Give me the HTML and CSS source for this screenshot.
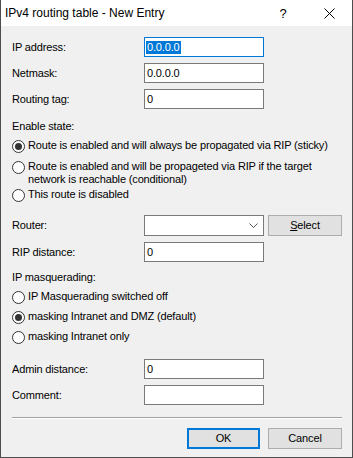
FILE: index.html
```html
<!DOCTYPE html>
<html>
<head>
<meta charset="utf-8">
<link rel="stylesheet" href="styles.css">
</head>
<body>
<div class="window">
  <div class="titlebar">
    <span class="title">IPv4 routing table - New Entry</span>
    <span class="cap help">?</span>
    <span class="cap close"><svg width="11" height="11" viewBox="0 0 11 11"><path d="M0.5 0.5 L10.5 10.5 M10.5 0.5 L0.5 10.5" stroke="#000" stroke-width="1" fill="none"/></svg></span>
  </div>
  <div class="content">
    <div class="row"><span class="lbl">IP address:</span><div class="input focus"><span class="sel">0.0.0.0</span></div></div>
    <div class="row gap6"><span class="lbl">Netmask:</span><div class="input">0.0.0.0</div></div>
    <div class="row gap6"><span class="lbl">Routing tag:</span><div class="input">0</div></div>

    <div class="group-label enable">Enable state:</div>
    <div class="radios">
      <div class="radio on"><span class="dot"></span><span class="rtext">Route is enabled and will always be propagated via RIP (sticky)</span></div>
      <div class="radio sp3"><span class="dot"></span><span class="rtext">Route is enabled and will be propageted via RIP if the target<br>network is reachable (conditional)</span></div>
      <div class="radio"><span class="dot"></span><span class="rtext">This route is disabled</span></div>
    </div>

    <div class="row router"><span class="lbl">Router:</span>
      <div class="combo"><svg class="chev" width="9" height="5" viewBox="0 0 9 5"><path d="M0.5 0.5 L4.5 4.5 L8.5 0.5" stroke="#555" stroke-width="1" fill="none"/></svg></div>
      <div class="btn select"><u>S</u>elect</div>
    </div>
    <div class="row gap6"><span class="lbl">RIP distance:</span><div class="input">0</div></div>

    <div class="group-label masq">IP masquerading:</div>
    <div class="radios">
      <div class="radio"><span class="dot"></span><span class="rtext">IP Masquerading switched off</span></div>
      <div class="radio on sp2"><span class="dot"></span><span class="rtext">masking Intranet and DMZ (default)</span></div>
      <div class="radio sp2"><span class="dot"></span><span class="rtext">masking Intranet only</span></div>
    </div>

    <div class="row admin"><span class="lbl">Admin distance:</span><div class="input">0</div></div>
    <div class="row gap6"><span class="lbl">Comment:</span><div class="input"></div></div>

    <div class="sep"></div>
    <div class="buttons">
      <div class="btn default">OK</div>
      <div class="btn cancel">Cancel</div>
    </div>
  </div>
</div>
</body>
</html>
```
FILE: styles.css
```css
html, body {
  margin: 0;
  padding: 0;
  background: #f0f0f0;
}
body {
  font-family: "Liberation Sans", Arial, sans-serif;
  color: #000;
}
.window {
  width: 353px;
  height: 458px;
  box-sizing: border-box;
  border: 1px solid #4d4d4d;
  border-top: none;
  display: flex;
  flex-direction: column;
  background: #f0f0f0;
}
.titlebar {
  height: 26px;
  background: #fff;
  display: flex;
  align-items: center;
  flex: none;
}
.title {
  flex: 1;
  padding-left: 4px;
  font-size: 12px;
  line-height: 26px;
  color: #000;
}
.cap {
  width: 46px;
  height: 26px;
  display: flex;
  align-items: center;
  justify-content: center;
}
.help {
  font-size: 13px;
  padding-top: 0px;
}
.close svg {
  display: block;
}
.content {
  flex: 1;
  padding: 11px 10px 0 11px;
  display: flex;
  flex-direction: column;
  font-size: 11px;
  letter-spacing: -0.15px;
}
.row {
  display: flex;
  align-items: center;
  height: 20px;
  flex: none;
}
.gap6 { margin-top: 6px; }
.lbl {
  width: 132px;
  line-height: 13px;
  flex: none;
}
.input {
  width: 120px;
  height: 20px;
  box-sizing: border-box;
  border: 1px solid #7a7a7a;
  background: #fff;
  padding-left: 2px;
  line-height: 18px;
  white-space: nowrap;
}
.input.focus {
  border-color: #0078d7;
  padding-left: 1px;
}
.sel {
  display: inline-block;
  background: #0078d7;
  color: #fff;
  line-height: 13px;
  padding: 0 1px;
  vertical-align: 0px;
}
.group-label {
  line-height: 13px;
  flex: none;
}
.enable { margin-top: 11px; }
.masq { margin-top: 9px; }
.radios {
  margin-top: 4px;
  display: flex;
  flex-direction: column;
}
.radio {
  display: flex;
  align-items: flex-start;
  padding: 2px 0;
  line-height: 13px;
}
.radio.sp3 { margin-top: 3px; padding-bottom: 0; }
.radio.sp2 { margin-top: 2px; }
.dot {
  width: 13px;
  height: 13px;
  box-sizing: border-box;
  border: 1px solid #333;
  border-radius: 50%;
  background: #fff;
  flex: none;
  margin-top: 1px;
  margin-right: 3px;
  display: flex;
  align-items: center;
  justify-content: center;
}
.radio.on .dot::after {
  content: "";
  width: 7px;
  height: 7px;
  border-radius: 50%;
  background: #333;
}
.rtext { white-space: nowrap; }
.router {
  margin-top: 11px;
  height: 21px;
}
.combo {
  width: 120px;
  height: 21px;
  box-sizing: border-box;
  border: 1px solid #7a7a7a;
  background: #fff;
  display: flex;
  align-items: center;
  justify-content: flex-end;
  padding-right: 5px;
}
.chev { display: block; }
.btn {
  height: 21px;
  box-sizing: border-box;
  background: #e1e1e1;
  border: 1px solid #adadad;
  display: flex;
  align-items: center;
  justify-content: center;
  font-size: 11px;
  line-height: 13px;
}
.select {
  width: 74px;
  margin-left: 4px;
}
.select u { text-decoration: underline; text-underline-offset: 1px; }
.admin { margin-top: 13px; }
.sep {
  margin-top: 12px;
  height: 0;
  border-top: 1px solid #a0a0a0;
  border-bottom: 1px solid #ffffff;
  flex: none;
}
.buttons {
  margin-top: 9px;
  display: flex;
  justify-content: flex-end;
  gap: 8px;
}
.default {
  width: 73px;
  border: 2px solid #0078d7;
}
.cancel {
  width: 74px;
}
```
